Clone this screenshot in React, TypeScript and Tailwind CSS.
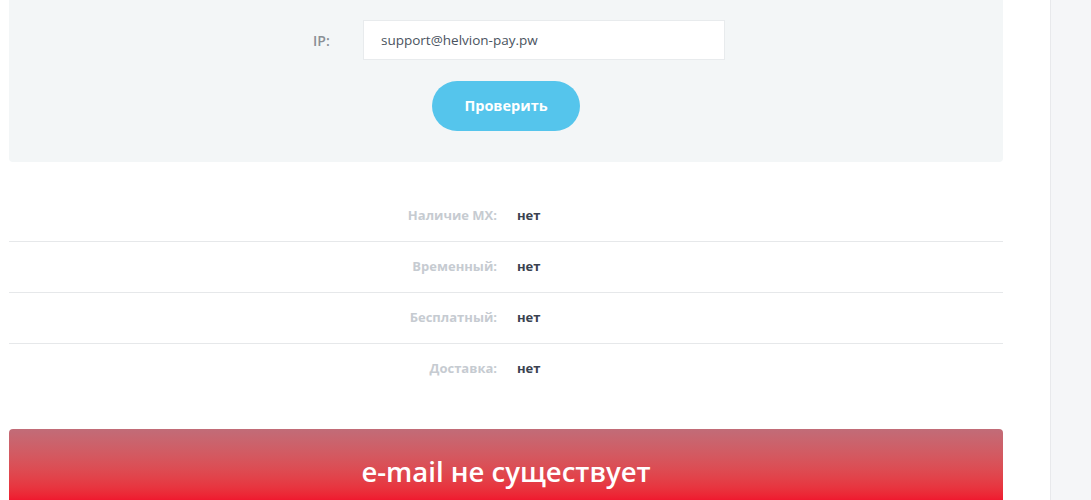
import React from "react";

const rows = [
  { label: "Наличие MX:", value: "нет" },
  { label: "Временный:", value: "нет" },
  { label: "Бесплатный:", value: "нет" },
  { label: "Доставка:", value: "нет" },
];

export default function App() {
  return (
    <div
      className="flex h-[500px] w-[1091px] overflow-hidden bg-white"
      style={{ fontFamily: '"Open Sans", "Noto Sans", sans-serif' }}
    >
      <div className="w-[1050px] shrink-0 overflow-hidden pl-[9px] pr-[47px]">
        <div className="rounded-b-[4px] bg-[#f3f6f7] pt-[20px] pb-[31px]">
          <div className="flex items-center">
            <div className="w-[304px] shrink-0" />
            <div className="w-[50px] shrink-0 text-[14px] font-semibold text-[#8a8f95]">IP:</div>
            <div className="flex h-[40px] w-[362px] items-center border border-[#e8ebed] bg-white pl-[17px] text-[13.5px] text-[#4a5360]">
              support@helvion-pay.pw
            </div>
          </div>
          <div className="mt-[21px] flex justify-center">
            <button className="h-[50px] w-[148px] rounded-full bg-[#55c5ec] text-[14.5px] font-bold text-white">
              Проверить
            </button>
          </div>
        </div>

        <div className="mt-[29px]">
          {rows.map((r, i) => (
            <div
              key={r.label}
              className={`flex h-[50px] items-center text-[13px] font-bold ${
                i < rows.length - 1 ? "box-content border-b border-[#e6e8ea]" : ""
              }`}
            >
              <div className="w-[488px] shrink-0 text-right text-[#c6cbd1]">{r.label}</div>
              <div className="ml-[20px] text-[#3a4250]">{r.value}</div>
            </div>
          ))}
        </div>

        <div className="mt-[35px] flex h-[86px] items-center justify-center rounded-t-[4px] bg-gradient-to-b from-[#c16c78] to-[#ef1a2f] to-[82%]">
          <span className="text-[27.5px] font-semibold text-white">e-mail не существует</span>
        </div>
      </div>
      <div className="flex-1 border-l border-[#e8e9ec] bg-[#f5f6f8]" />
    </div>
  );
}
